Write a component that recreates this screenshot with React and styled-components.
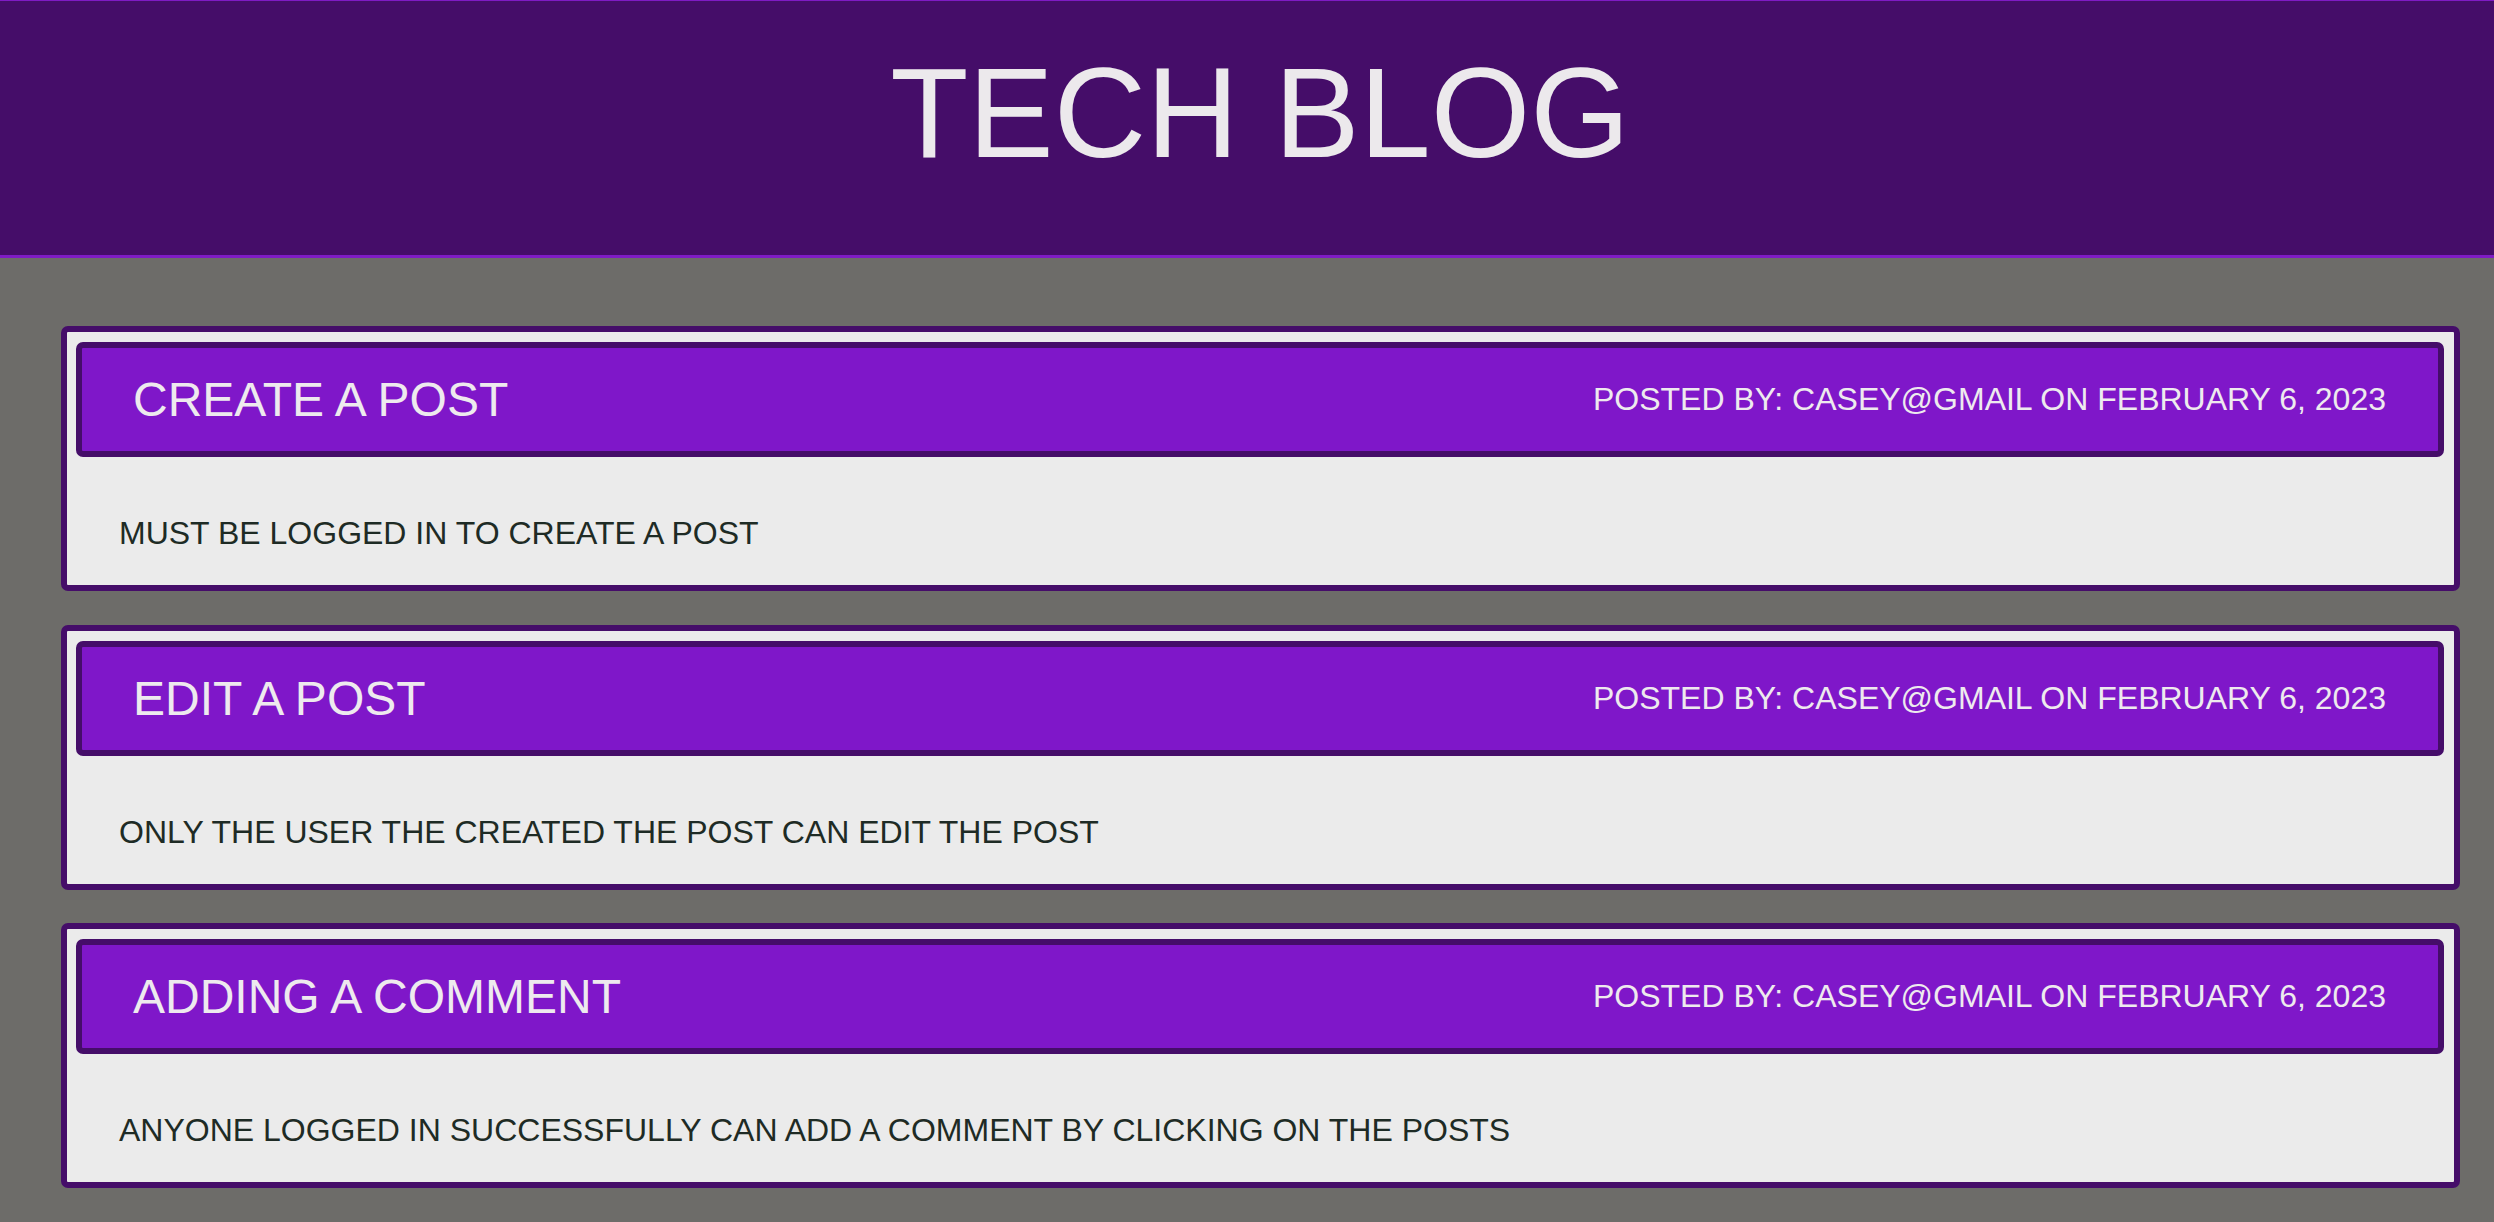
import React from 'react';
import styled, { createGlobalStyle } from 'styled-components';

const posts = [
  {
    title: 'CREATE A POST',
    meta: 'POSTED BY: CASEY@GMAIL ON FEBRUARY 6, 2023',
    body: 'MUST BE LOGGED IN TO CREATE A POST',
  },
  {
    title: 'EDIT A POST',
    meta: 'POSTED BY: CASEY@GMAIL ON FEBRUARY 6, 2023',
    body: 'ONLY THE USER THE CREATED THE POST CAN EDIT THE POST',
  },
  {
    title: 'ADDING A COMMENT',
    meta: 'POSTED BY: CASEY@GMAIL ON FEBRUARY 6, 2023',
    body: 'ANYONE LOGGED IN SUCCESSFULLY CAN ADD A COMMENT BY CLICKING ON THE POSTS',
  },
];

const App = () => (
  <>
    <GlobalStyle />
    <Header>
      <Logo>TECH BLOG</Logo>
    </Header>
    <Main>
      {posts.map(post => (
        <Card key={post.title}>
          <CardHeader>
            <CardTitle>{post.title}</CardTitle>
            <CardMeta>{post.meta}</CardMeta>
          </CardHeader>
          <CardBody>{post.body}</CardBody>
        </Card>
      ))}
    </Main>
  </>
);

const GlobalStyle = createGlobalStyle`
    html, body {
        margin: 0;
        padding: 0;
        background: #6d6c69;
        font-family: "Liberation Sans", Arial, sans-serif;
    }
    * {
        box-sizing: border-box;
    }
`
const Header = styled.header`
    height: 258px;
    background: #450d69;
    border-top: 1px solid #7f1bc4;
    border-bottom: 3px solid #7f1bc4;
    padding: 38px 0 0 26px;
    text-align: center;
`
const Logo = styled.h1`
    margin: 0;
    font-size: 128px;
    font-weight: 400;
    color: #ece9ec;
    line-height: 147px;
`
const Main = styled.main`
    display: flex;
    flex-direction: column;
    gap: 33.5px;
    padding: 68px 34px 40px 61px;
`
const Card = styled.section`
    height: 265px;
    background: #ebebeb;
    border: 6px solid #450d69;
    border-radius: 7px;
    padding: 10px 10px 0 9px;
    display: flex;
    flex-direction: column;
`
const CardHeader = styled.div`
    height: 115px;
    flex-shrink: 0;
    display: flex;
    align-items: center;
    justify-content: space-between;
    padding: 0 52px 0 51px;
    background: #7f17c9;
    border: 6px solid #450d69;
    border-radius: 7px;
    color: #eeeaee;
`
const CardTitle = styled.h2`
    margin: 0;
    font-size: 48px;
    font-weight: 400;
`
const CardMeta = styled.span`
    font-size: 32px;
`
const CardBody = styled.p`
    margin: 0;
    padding: 58px 0 0 43px;
    font-size: 32px;
    line-height: 37px;
    color: #1e2b25;
`

export default App;
